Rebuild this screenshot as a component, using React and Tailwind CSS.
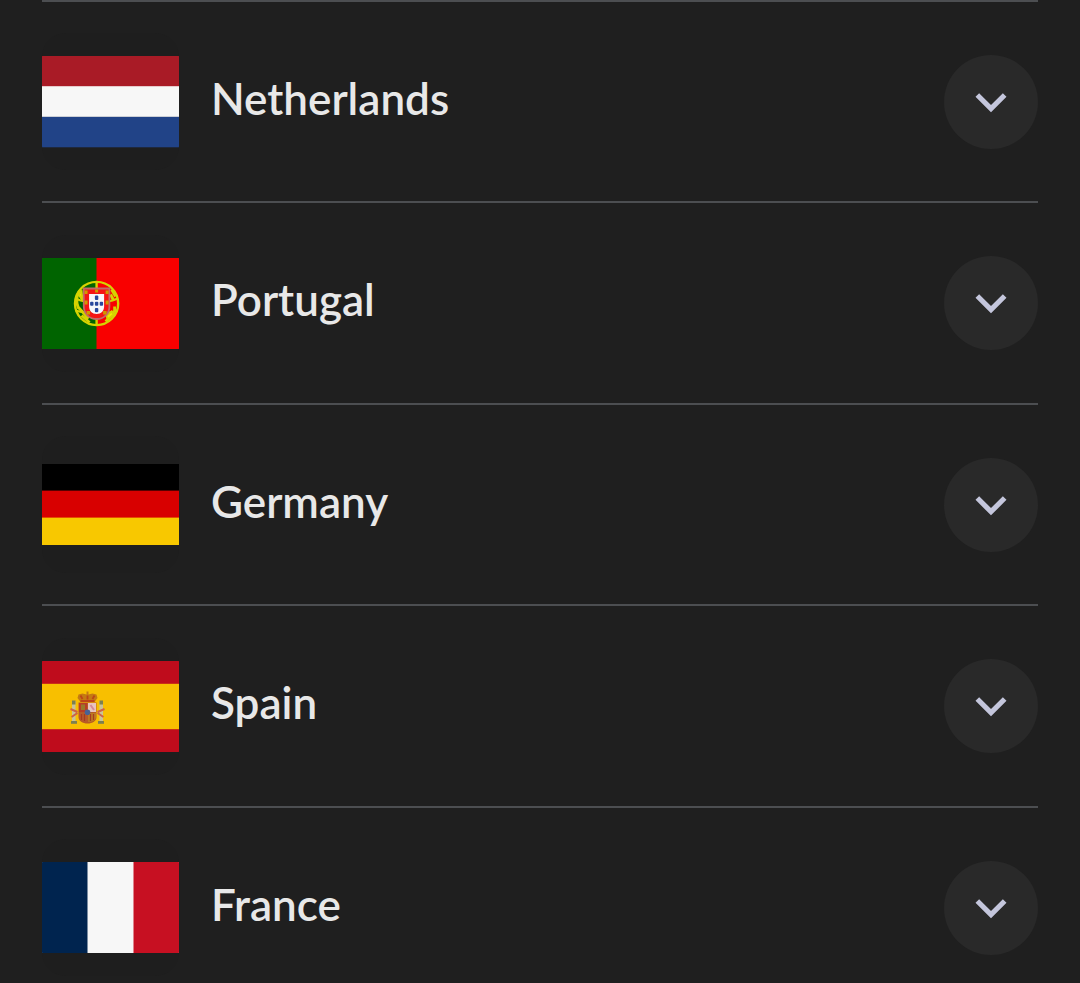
function Netherlands() {
  return (
    <svg viewBox="0 0 137 92" className="block w-full" aria-hidden="true">
      <rect width="137" height="31" fill="#a91b26" />
      <rect y="60.5" width="137" height="30.8" fill="#214387" />
      <rect y="30.2" width="137" height="30.6" fill="#f7f7f7" />
    </svg>
  );
}

function Portugal() {
  return (
    <svg viewBox="0 0 137 91" className="block w-full" aria-hidden="true">
      <rect width="137" height="91" fill="#f90000" />
      <rect width="54.5" height="91" fill="#006400" />
      <g transform="translate(54.6 45.5)" fill="none" stroke="#d6d300">
        <circle r="21.6" strokeWidth="2.4" />
        <path d="M0-22V22" strokeWidth="2.4" />
        <path d="M-21-5C-15-2-10-1 0-1S15-2 21-5M-21 7C-15 9-10 10 0 10S15 9 21 7" strokeWidth="2" />
        <path d="M-16-14C-20-9-21-2-18 5M-16-9L-13-2M-19 3L-8 15M-15 12L-7 19M15-14L19-7M14-9L17-3M18 3V9M9 18L18 9" strokeWidth="2.8" />
        <path d="M10 12L15 8L17 11L11 16Z" fill="#f2ee00" strokeWidth="2" />
        <path d="M-18-9L-15-12L-14-3Z" fill="#f2ee00" strokeWidth="2" />
      </g>
      <g transform="translate(54.6 45.5)">
        <path d="M-12.8-15H12.800V3C12.800 10.500 7 15.500 0 15.500S-12.800 10.500-12.800 3Z" fill="#f51414" stroke="#c06a68" strokeWidth="1.800" />
        <path d="M-7.500-9.500H7.500V3C7.500 7.500 4.500 10.500 0 10.500S-7.500 7.500-7.500 3Z" fill="#f7f7fa" />
        <g fill="#29479c">
          <rect x="-1.700" y="-8" width="3.400" height="4.500" rx="1" />
          <rect x="-1.700" y="-1.800" width="3.400" height="4" rx="1" />
          <rect x="-1.700" y="4.500" width="3.400" height="4.300" rx="1" />
          <rect x="-6.500" y="-1.800" width="3.400" height="4" rx="1" />
          <rect x="3.100" y="-1.800" width="3.400" height="4" rx="1" />
        </g>
        <g fill="#cf9a00">
          <rect x="-12" y="-13" width="3" height="3.500" />
          <rect x="-1.500" y="-14" width="3" height="3" />
          <rect x="9" y="-13" width="3" height="3.500" />
          <rect x="-12" y="-3" width="3" height="4" />
          <rect x="9" y="-3" width="3" height="4" />
          <rect x="-10" y="7.500" width="3.500" height="3.500" />
          <rect x="6.500" y="7.500" width="3.500" height="3.500" />
        </g>
      </g>
    </svg>
  );
}

function Germany() {
  return (
    <svg viewBox="0 0 137 81" className="block w-full" aria-hidden="true">
      <rect width="137" height="81" fill="#000" />
      <rect y="26.6" width="137" height="28" fill="#d80000" />
      <rect y="53.6" width="137" height="27.4" fill="#f8c800" />
    </svg>
  );
}

function Spain() {
  return (
    <svg viewBox="0 0 137 91" className="block w-full" aria-hidden="true">
      <rect width="137" height="91" fill="#bf0c1c" />
      <rect y="22.8" width="137" height="45.4" fill="#f8bf00" />
      <g transform="translate(45.5 47)">
        <g fill="#c9c299">
          <rect x="-15.500" y="-7" width="3.500" height="21" />
          <rect x="12" y="-7" width="3.500" height="21" />
        </g>
        <g fill="#7d8050">
          <rect x="-15.500" y="-7.500" width="3.500" height="4" />
          <rect x="12" y="-7.500" width="3.500" height="4" />
          <rect x="-16.500" y="13" width="6" height="2.800" />
          <rect x="10.500" y="13" width="6" height="2.800" />
        </g>
        <path d="M-17 1L-10 4M-16 9L-10 5M17 1L10 4M16 9L10 5" stroke="#cc6248" strokeWidth="2" fill="none" />
        <path d="M-7-6L-10-10L-9-13.500L-5-14.500L-1-13.500V-16.500H1V-13.500L5-14.500L9-13.500L10-10L7-6Z" fill="#c47a12" />
        <path d="M-5-9L-7-12.500M0-8.500V-12.500M5-9L7-12.500M-7-7H7" stroke="#bd4518" strokeWidth="1.800" fill="none" />
        <path d="M-9-5.500H9V9C9 13 5 15.500 0 15.500S-9 13-9 9Z" fill="#b85a24" />
        <path d="M-8.500-5H-.5V4H-8.500Z" fill="#b83d26" />
        <path d="M-6.500-3.500H-2.500V2H-6.500Z" fill="#98782a" />
        <path d="M.5-5H8.500V4H.5Z" fill="#e8c4be" />
        <path d="M3-3L6.500 2" stroke="#d48a98" strokeWidth="2" />
        <path d="M-8.500 5H-.5V14C-5 14-8.500 12-8.500 9Z" fill="#b8592a" />
        <path d="M.5 5H8.500V9C8.500 12 5 14 .5 14Z" fill="#bd7a22" />
        <path d="M-6 6V12M-3 6V13M3 6V13M6 6V12" stroke="#a63a20" strokeWidth="1.200" />
        <circle cy="4.300" r="2.800" fill="#4a6293" />
      </g>
    </svg>
  );
}

function France() {
  return (
    <svg viewBox="0 0 137 91" className="block w-full" aria-hidden="true">
      <rect width="137" height="91" fill="#f7f7f7" />
      <rect width="45.5" height="91" fill="#00244f" />
      <rect x="91.5" width="45.5" height="91" fill="#c71022" />
    </svg>
  );
}

function Chevron() {
  return (
    <svg viewBox="0 0 24 24" className="size-[62px]" fill="#c4c6dc" aria-hidden="true">
      <path d="M16.59 8.59L12 13.17 7.41 8.59 6 10l6 6 6-6z" />
    </svg>
  );
}

const countries = [
  { name: "Netherlands", Flag: Netherlands },
  { name: "Portugal", Flag: Portugal },
  { name: "Germany", Flag: Germany },
  { name: "Spain", Flag: Spain },
  { name: "France", Flag: France },
];

export default function App() {
  return (
    <main className="h-screen overflow-hidden bg-[#1f1f1f] px-[42px] font-['Lato',sans-serif] text-[#e8e8e8]">
      <ul>
        {countries.map(({ name, Flag }) => (
          <li
            key={name}
            className="flex items-center gap-8 border-t-2 border-[#4c4e51] odd:min-h-[201px] even:min-h-[202px]"
          >
            <div className="flex size-[137px] shrink-0 items-center overflow-hidden rounded-3xl bg-[#1e1e1e]">
              <Flag />
            </div>
            <h2 className="flex-1 pb-2 text-[44px] leading-[52px] font-semibold">{name}</h2>
            <button
              type="button"
              aria-label={`Show ${name}`}
              aria-expanded="false"
              className="flex size-[94px] shrink-0 items-center justify-center rounded-full bg-[#292929]"
            >
              <Chevron />
            </button>
          </li>
        ))}
      </ul>
    </main>
  );
}
